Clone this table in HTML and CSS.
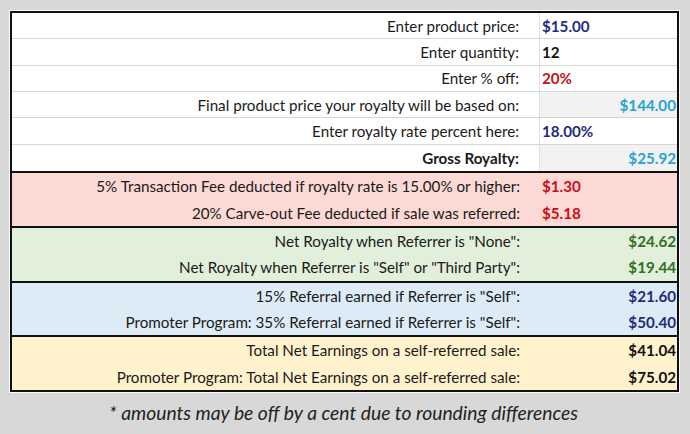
FILE: index.html
```html
<!DOCTYPE html>
<html lang="en">
<head>
<meta charset="utf-8">
<title>Royalty Calculator</title>
<link rel="stylesheet" href="styles.css">
</head>
<body>
<div class="sheet">
  <section class="sec sec-input">
    <div class="row"><div class="label">Enter product price:</div><div class="val navy">$15.00</div></div>
    <div class="row"><div class="label">Enter quantity:</div><div class="val black">12</div></div>
    <div class="row"><div class="label">Enter % off:</div><div class="val red">20%</div></div>
    <div class="row"><div class="label">Final product price your royalty will be based on:</div><div class="val calc sky">$144.00</div></div>
    <div class="row"><div class="label">Enter royalty rate percent here:</div><div class="val navy">18.00%</div></div>
    <div class="row"><div class="label bold">Gross Royalty:</div><div class="val calc sky">$25.92</div></div>
  </section>
  <section class="sec sec-red">
    <div class="row"><div class="label">5% Transaction Fee deducted if royalty rate is 15.00% or higher:</div><div class="val red">$1.30</div></div>
    <div class="row"><div class="label">20% Carve-out Fee deducted if sale was referred:</div><div class="val red">$5.18</div></div>
  </section>
  <section class="sec sec-green">
    <div class="row"><div class="label">Net Royalty when Referrer is "None":</div><div class="val right green">$24.62</div></div>
    <div class="row"><div class="label">Net Royalty when Referrer is "Self" or "Third Party":</div><div class="val right green">$19.44</div></div>
  </section>
  <section class="sec sec-blue">
    <div class="row"><div class="label">15% Referral earned if Referrer is "Self":</div><div class="val right navy">$21.60</div></div>
    <div class="row"><div class="label">Promoter Program: 35% Referral earned if Referrer is "Self":</div><div class="val right navy">$50.40</div></div>
  </section>
  <section class="sec sec-yellow">
    <div class="row"><div class="label">Total Net Earnings on a self-referred sale:</div><div class="val right black">$41.04</div></div>
    <div class="row"><div class="label">Promoter Program: Total Net Earnings on a self-referred sale:</div><div class="val right black">$75.02</div></div>
  </section>
</div>
<p class="note">* amounts may be off by a cent due to rounding differences</p>
</body>
</html>
```
FILE: styles.css
```css
html, body {
  margin: 0;
  padding: 0;
  background: #d8d8d8;
}
body {
  font-family: Lato, "Open Sans", sans-serif;
  color: #1a1a1a;
  overflow: hidden;
}
.sheet {
  box-sizing: border-box;
  margin: 11px 0 0 10px;
  width: 669px;
  border: 2px solid #111;
  outline: 1px solid #fafafa;
  background: #fff;
}
.sec + .sec {
  border-top: 2px solid #111;
}
.row {
  box-sizing: border-box;
  display: flex;
  height: 26.36px;
  font-size: 15.2px;
}
.label {
  box-sizing: border-box;
  width: 528px;
  flex: none;
  text-align: right;
  padding-right: 20px;
  display: flex;
  align-items: center;
  justify-content: flex-end;
  white-space: nowrap;
}
.val {
  flex: 1;
  display: flex;
  align-items: center;
  padding-left: 2px;
  font-weight: 700;
  white-space: nowrap;
}
.val.right, .val.calc {
  justify-content: flex-end;
  padding-left: 0;
  padding-right: 1px;
}
.bold { font-weight: 700; }
.sec-input .row { border-bottom: 1px solid #d6d6d6; }
.sec-input .row:last-child { border-bottom: 0; }
.sec-input .label { border-right: 1px solid #e0e0e0; }
.sec-input .val.calc { background: #f2f2f2; }
.sec-red { background: #fdd9d5; }
.sec-green { background: #e2efda; }
.sec-blue { background: #ddebf7; }
.sec-yellow { background: #fff2cc; }
.navy { color: #1f2a7f; }
.black { color: #111; }
.red { color: #c80f14; }
.sky { color: #27a2d6; }
.green { color: #32701f; }
.note {
  margin: 9px 0 0;
  padding-right: 3px;
  text-align: center;
  font-style: italic;
  font-size: 19.3px;
  color: #222;
}
```
